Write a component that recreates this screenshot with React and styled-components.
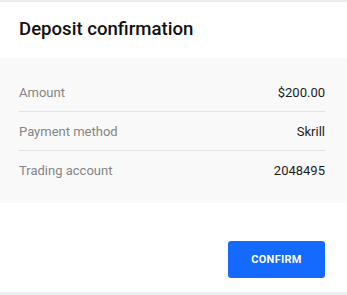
import React from 'react';
import styled, { createGlobalStyle } from 'styled-components';

const GlobalStyle = createGlobalStyle`
  html, body {
    margin: 0;
    padding: 0;
    background: #ffffff;
    font-family: Roboto, "Liberation Sans", Arial, sans-serif;
  }
`;

const Page = styled.div`
  width: 347px;
  height: 295px;
  display: flex;
  flex-direction: column;
  background: #ebecf0;
  padding: 2px 0 3px;
  box-sizing: border-box;
`;

const Dialog = styled.div`
  flex: 1;
  display: flex;
  flex-direction: column;
  background: #ffffff;
`;

const Header = styled.div`
  height: 56px;
  display: flex;
  align-items: center;
  padding: 0 19px 2px;
  box-sizing: border-box;
`;

const Title = styled.h1`
  margin: 0;
  font-size: 18.6px;
  font-weight: 500;
  color: #111111;
`;

const Details = styled.div`
  background: #f9f9f9;
  padding: 15px 22px 14px 19px;
`;

const Row = styled.div`
  height: 38px;
  display: flex;
  align-items: center;
  justify-content: space-between;
  font-size: 13px;
  border-top: ${(p) => (p.first ? 'none' : '1px solid #e3e3e3')};
`;

const Label = styled.span`
  color: #858585;
`;

const Value = styled.span`
  color: #1c1c1c;
`;

const Footer = styled.div`
  flex: 1;
  display: flex;
  justify-content: flex-end;
  align-items: flex-start;
  padding: 38px 22px 0 0;
`;

const Button = styled.button`
  width: 97px;
  height: 37px;
  border: none;
  border-radius: 3px;
  background: #1469ff;
  color: #ffffff;
  font-family: Roboto, "Liberation Sans", Arial, sans-serif;
  font-size: 11px;
  font-weight: 700;
  letter-spacing: 0.3px;
  cursor: pointer;
`;

const rows = [
  { label: 'Amount', value: '$200.00' },
  { label: 'Payment method', value: 'Skrill' },
  { label: 'Trading account', value: '2048495' },
];

const App = () => (
  <>
    <GlobalStyle />
    <Page>
      <Dialog>
        <Header>
          <Title>Deposit confirmation</Title>
        </Header>
        <Details>
          {rows.map((r, i) => (
            <Row key={r.label} first={i === 0}>
              <Label>{r.label}</Label>
              <Value>{r.value}</Value>
            </Row>
          ))}
        </Details>
        <Footer>
          <Button>CONFIRM</Button>
        </Footer>
      </Dialog>
    </Page>
  </>
);

export default App;
